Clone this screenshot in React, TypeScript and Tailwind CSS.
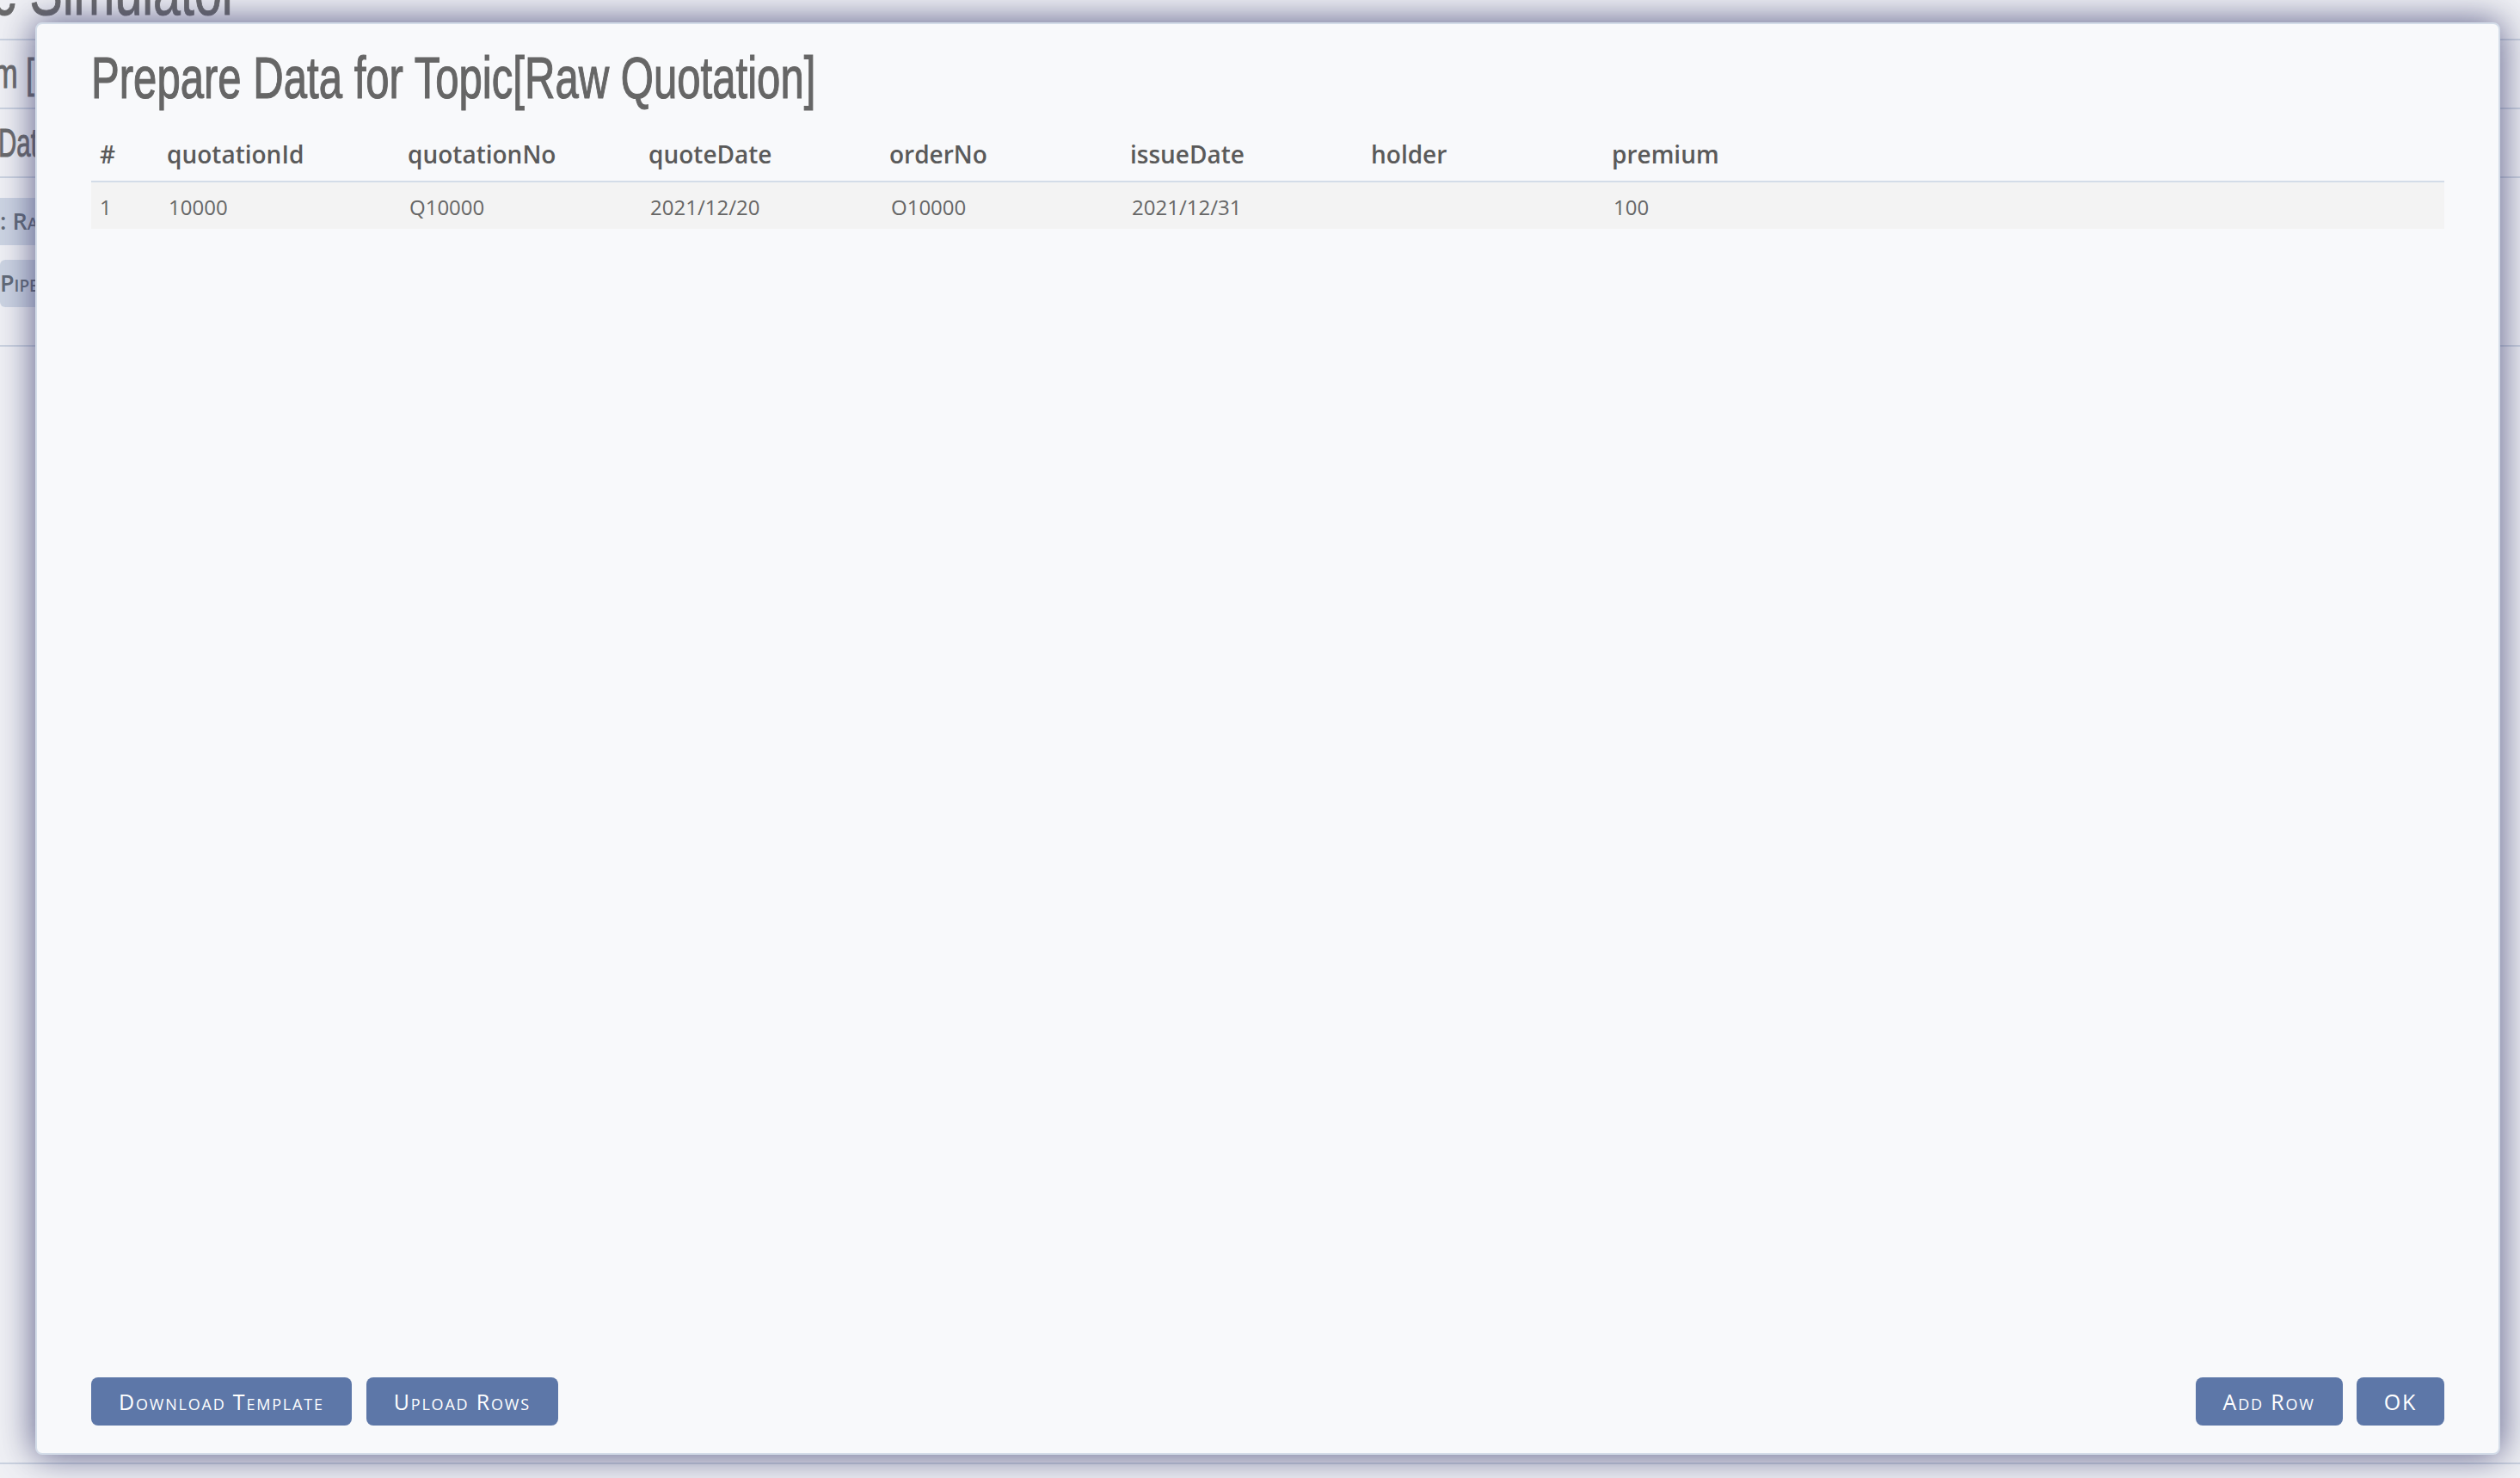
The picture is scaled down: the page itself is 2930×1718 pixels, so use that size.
import React from "react";

const columns = ["quotationId", "quotationNo", "quoteDate", "orderNo", "issueDate", "holder", "premium"];

const rows = [
  { quotationId: "10000", quotationNo: "Q10000", quoteDate: "2021/12/20", orderNo: "O10000", issueDate: "2021/12/31", holder: "", premium: "100" },
];

function ActionButton({ label }: { label: string }) {
  return (
    <button className="h-[56px] px-8 rounded-[8px] bg-[#5d77a8] text-white text-[25px] tracking-[1.8px] [font-variant:small-caps] leading-none">
      {label}
    </button>
  );
}

function BackgroundPage() {
  // the page that sits behind the dialog
  return (
    <div className="flex flex-col text-[#555] font-['Liberation_Sans',sans-serif]">
      <div className="h-[47px] border-b-2 border-[#c7d0de] flex items-end">
        <div className="ml-[-10px] mb-[15px] text-[80px] leading-none [-webkit-text-stroke:1px_#555] scale-x-[0.717] origin-left whitespace-nowrap">
          c Simulator
        </div>
      </div>
      <div className="h-[80px] border-b-2 border-[#c7d0de] flex items-center">
        <span className="ml-[-8px] text-[48px] leading-none [-webkit-text-stroke:1px_#555] scale-x-[0.717] origin-left whitespace-nowrap">m [</span>
      </div>
      <div className="h-[80px] border-b-2 border-[#c7d0de] flex items-center">
        <span className="ml-[-2px] text-[46px] leading-none [-webkit-text-stroke:1px_#555] scale-x-[0.64] origin-left whitespace-nowrap">Data</span>
      </div>
      <div className="h-[196px] border-b-2 border-[#c7d0de] flex flex-col gap-[17px] pt-[23px] items-start">
        <div className="h-[55px] w-[240px] ml-[-40px] pl-[40px] bg-[#c9d3e2] rounded-[6px] flex items-center text-[27px] font-['Open_Sans',sans-serif] font-semibold [font-variant:small-caps] text-[#4b5563] whitespace-nowrap">
          : Raw Quotation
        </div>
        <div className="h-[55px] w-[220px] bg-[#c9d3e2] rounded-[6px] flex items-center text-[27px] font-['Open_Sans',sans-serif] font-semibold [font-variant:small-caps] text-[#4b5563] whitespace-nowrap">
          Pipeline
        </div>
      </div>
      <div className="h-[1297px]" />
      <div className="h-[2px] bg-[#c7d0de]" />
    </div>
  );
}

export default function App() {
  return (
    <div className="relative w-[2930px] h-[1718px] overflow-hidden bg-[#f3f4f7] font-['Open_Sans',sans-serif]">
      <BackgroundPage />

      <div className="absolute inset-0 bg-[rgba(230,231,238,0.15)] flex pt-[26px] pl-[41px] pr-[23px] pb-[27px]">
        <div className="flex-1 flex flex-col bg-[#f8f9fb] border-2 border-[#d3dce8] rounded-[8px] shadow-[0_0_42px_2px_rgba(60,62,112,0.8)] pt-[28px] px-[63px] pb-[32px]">
          <h1 className="text-[68px] leading-none text-[#666] font-['Liberation_Sans',sans-serif] [-webkit-text-stroke:1.2px_#666] scale-x-[0.722] origin-left whitespace-nowrap">
            Prepare Data for Topic[Raw Quotation]
          </h1>

          <div className="mt-[24px]">
            <div className="grid grid-cols-[78px_repeat(7,280px)_1fr] h-[64px] items-center border-b-2 border-[#d3dce8] text-[28px] font-semibold text-[#5a5a5a]">
              <div className="px-[10px]">#</div>
              {columns.map((c) => (
                <div key={c} className="px-[10px]">{c}</div>
              ))}
              <div />
            </div>
            {rows.map((r, i) => (
              <div key={i} className="grid grid-cols-[78px_repeat(7,280px)_1fr] h-[54px] pt-[4px] items-center bg-[#f3f3f3] text-[24px] text-[#666]">
                <div className="px-[10px]">{i + 1}</div>
                {columns.map((c) => (
                  <div key={c} className="px-[12px]">{r[c as keyof typeof r]}</div>
                ))}
                <div />
              </div>
            ))}
          </div>

          <div className="flex-1" />

          <div className="flex items-center justify-between">
            <div className="flex gap-[17px]">
              <ActionButton label="Download Template" />
              <ActionButton label="Upload Rows" />
            </div>
            <div className="flex gap-[16px]">
              <ActionButton label="Add Row" />
              <ActionButton label="OK" />
            </div>
          </div>
        </div>
      </div>
    </div>
  );
}
